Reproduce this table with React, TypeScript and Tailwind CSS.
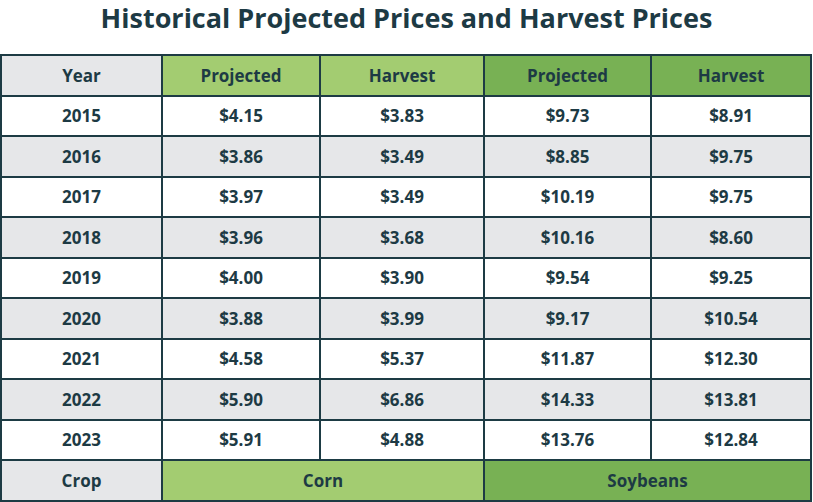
import React from 'react';

// Historical projected vs harvest prices table
const rows: [string, string, string, string, string][] = [
  ['2015', '$4.15', '$3.83', '$9.73', '$8.91'],
  ['2016', '$3.86', '$3.49', '$8.85', '$9.75'],
  ['2017', '$3.97', '$3.49', '$10.19', '$9.75'],
  ['2018', '$3.96', '$3.68', '$10.16', '$8.60'],
  ['2019', '$4.00', '$3.90', '$9.54', '$9.25'],
  ['2020', '$3.88', '$3.99', '$9.17', '$10.54'],
  ['2021', '$4.58', '$5.37', '$11.87', '$12.30'],
  ['2022', '$5.90', '$6.86', '$14.33', '$13.81'],
  ['2023', '$5.91', '$4.88', '$13.76', '$12.84'],
];

const cell = 'flex items-center justify-center text-[17px] font-bold text-[#1d3a44]';

export default function App() {
  return (
    <div className="w-[813px] h-[502px] bg-white font-['Open_Sans',sans-serif] flex flex-col">
      <div className="h-[54px] flex items-start justify-center">
        <h1 className="text-[27px] leading-[35px] font-bold text-[#1d3a44]">
          Historical Projected Prices and Harvest Prices
        </h1>
      </div>
      <div className="w-[812px] h-[448px] bg-[#1d3b44] p-[2px] grid grid-cols-[159px_156px_162px_165px_158px] grid-rows-11 gap-[2px]">
        <div className={`${cell} bg-[#e6e7e9]`}>Year</div>
        <div className={`${cell} bg-[#a3cc71]`}>Projected</div>
        <div className={`${cell} bg-[#a3cc71]`}>Harvest</div>
        <div className={`${cell} bg-[#78b154]`}>Projected</div>
        <div className={`${cell} bg-[#78b154]`}>Harvest</div>
        {rows.map((r, i) =>
          r.map((v, j) => (
            <div key={`${i}-${j}`} className={`${cell} ${i % 2 === 0 ? 'bg-white' : 'bg-[#e6e7e9]'}`}>
              {v}
            </div>
          ))
        )}
        <div className={`${cell} bg-[#e6e7e9]`}>Crop</div>
        <div className={`${cell} col-span-2 bg-[#a3cc71]`}>Corn</div>
        <div className={`${cell} col-span-2 bg-[#78b154]`}>Soybeans</div>
      </div>
    </div>
  );
}
